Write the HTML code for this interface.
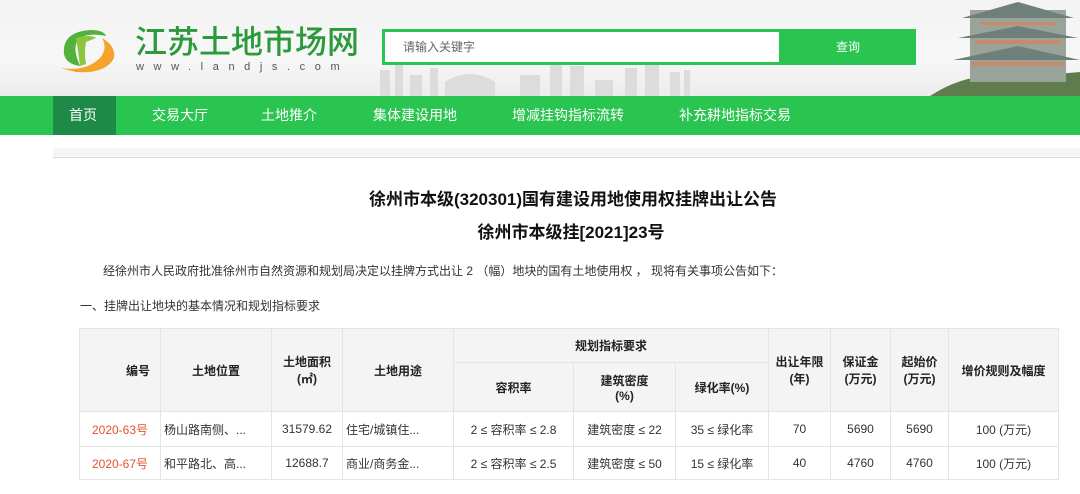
<!DOCTYPE html>
<html><head><meta charset="utf-8"><style>
*{margin:0;padding:0;box-sizing:border-box}
body{width:1080px;height:494px;overflow:hidden;background:#fff;font-family:"Liberation Sans","Noto Sans CJK SC",sans-serif;position:relative}
.hdr{position:absolute;left:0;top:0;width:1080px;height:96px;background:linear-gradient(180deg,#f2f3f2,#f7f7f7 60%,#ececec)}
.a{position:absolute}
.nav{position:absolute;left:0;top:96px;width:1080px;height:39px;background:#2ac450}
.nav span{position:absolute;top:0;height:39px;line-height:39px;color:#fff;font-size:14px}
table{position:absolute;left:79px;top:328px;border-collapse:collapse;font-size:12px;color:#333}
td{border:1px solid #e4e4e4;text-align:center;padding:0}
.h td{background:#f4f4f4;font-weight:bold;color:#222}
.r td{background:#fff}
</style></head><body>
<div class="hdr"></div>
<svg class="a" style="left:370px;top:0" width="710" height="96">
 <g fill="#dcdcdc">
  <rect x="10" y="70" width="10" height="26"/><rect x="25" y="65" width="8" height="31"/><rect x="40" y="75" width="12" height="21"/>
  <rect x="60" y="68" width="8" height="28"/><path d="M75 96V82Q100 66 125 82V96Z"/><rect x="150" y="75" width="20" height="21"/>
  <rect x="180" y="62" width="12" height="34"/><rect x="200" y="66" width="14" height="30"/><rect x="225" y="80" width="18" height="16"/>
  <rect x="255" y="68" width="12" height="28"/><rect x="275" y="64" width="14" height="32"/><rect x="300" y="72" width="10" height="24"/><rect x="314" y="70" width="6" height="26"/>
 </g>
 <path d="M560 96Q600 70 640 78L710 72V96Z" fill="#5f7d4c"/>
 <g fill="#9aa39a"><rect x="600" y="10" width="96" height="72"/></g>
 <g fill="#c98a6a"><rect x="605" y="40" width="86" height="4"/><rect x="602" y="62" width="92" height="4"/><rect x="610" y="22" width="76" height="3"/></g>
 <g fill="#6f7f7a"><path d="M588 38L648 26L708 38Z"/><path d="M583 60L648 46L710 60Z"/><path d="M592 18L648 2L704 18Z"/></g>
</svg>
<svg class="a" style="left:56px;top:24px" width="66" height="50"><path d="M8 30Q6 8 34 6Q48 6 50 12Q30 8 22 16Q16 24 24 42Q10 40 8 30Z" fill="#52b13b"/><path d="M20 14Q34 10 40 14L30 18Q28 30 30 40L24 42Q22 26 20 14Z" fill="#8cc63f"/><path d="M4 44Q30 48 44 34Q52 24 46 14Q60 22 58 34Q50 50 20 48Z" fill="#f4a42a"/></svg>
<div class="a" style="left:135px;top:20px;font-size:32px;color:#2a9a3b;letter-spacing:0px;font-family:'Noto Sans CJK SC',sans-serif;font-weight:500;line-height:40px">江苏土地市场网</div>
<div class="a" style="left:136px;top:61px;font-size:11px;color:#555;letter-spacing:9.6px">www.landjs.com</div>
<div class="a" style="left:382px;top:29px;width:400px;height:36px;border:3px solid #2ac450;background:#fff;font-size:12px;color:#666;line-height:30px;padding-left:18px">请输入关键字</div>
<div class="a" style="left:780px;top:29px;width:136px;height:36px;background:#2ac450;color:#fff;font-size:12px;line-height:36px;text-align:center">查询</div>
<div class="nav">
 <div class="a" style="left:53px;top:0;width:63px;height:39px;background:#1e8a48"></div>
 <span style="left:69px">首页</span><span style="left:152px">交易大厅</span><span style="left:261px">土地推介</span><span style="left:373px">集体建设用地</span><span style="left:512px">增减挂钩指标流转</span><span style="left:679px">补充耕地指标交易</span>
</div>
<div class="a" style="left:53px;top:148px;width:1027px;height:10px;background:#f5f4f6;border-bottom:1px solid #ddd"></div>
<div class="a" style="left:0;top:188px;width:1146px;text-align:center;font-size:17px;font-weight:bold;color:#111;line-height:24px">徐州市本级(320301)国有建设用地使用权挂牌出让公告</div>
<div class="a" style="left:0;top:221px;width:1142px;text-align:center;font-size:17px;font-weight:bold;color:#111;line-height:24px">徐州市本级挂[2021]23号</div>
<div class="a" style="left:103px;top:262px;font-size:12px;color:#333">经徐州市人民政府批准徐州市自然资源和规划局决定以挂牌方式出让 2 （幅）地块的国有土地使用权 ， 现将有关事项公告如下：</div>
<div class="a" style="left:80px;top:297px;font-size:12px;color:#333">一、挂牌出让地块的基本情况和规划指标要求</div>
<table>
<colgroup><col style="width:81px"><col style="width:111px"><col style="width:71px"><col style="width:111px"><col style="width:120px"><col style="width:102px"><col style="width:93px"><col style="width:62px"><col style="width:60px"><col style="width:58px"><col style="width:110px"></colgroup>
<tr class="h" style="height:34px"><td rowspan="2" style="text-align:right;padding-right:10px">编号</td><td rowspan="2">土地位置</td><td rowspan="2">土地面积<br>(㎡)</td><td rowspan="2">土地用途</td><td colspan="3">规划指标要求</td><td rowspan="2">出让年限<br>(年)</td><td rowspan="2">保证金<br>(万元)</td><td rowspan="2">起始价<br>(万元)</td><td rowspan="2">增价规则及幅度</td></tr>
<tr class="h" style="height:49px"><td>容积率</td><td>建筑密度<br>(%)</td><td>绿化率(%)</td></tr>
<tr class="r" style="height:35px"><td style="color:#e0532e">2020-63号</td><td style="text-align:left;padding-left:3px">杨山路南侧、...</td><td>31579.62</td><td style="text-align:left;padding-left:3px">住宅/城镇住...</td><td>2 ≤ 容积率 ≤ 2.8</td><td>建筑密度 ≤ 22</td><td>35 ≤ 绿化率</td><td>70</td><td>5690</td><td>5690</td><td>100 (万元)</td></tr>
<tr class="r" style="height:33px"><td style="color:#e0532e">2020-67号</td><td style="text-align:left;padding-left:3px">和平路北、高...</td><td>12688.7</td><td style="text-align:left;padding-left:3px">商业/商务金...</td><td>2 ≤ 容积率 ≤ 2.5</td><td>建筑密度 ≤ 50</td><td>15 ≤ 绿化率</td><td>40</td><td>4760</td><td>4760</td><td>100 (万元)</td></tr>
</table>
</body></html>
